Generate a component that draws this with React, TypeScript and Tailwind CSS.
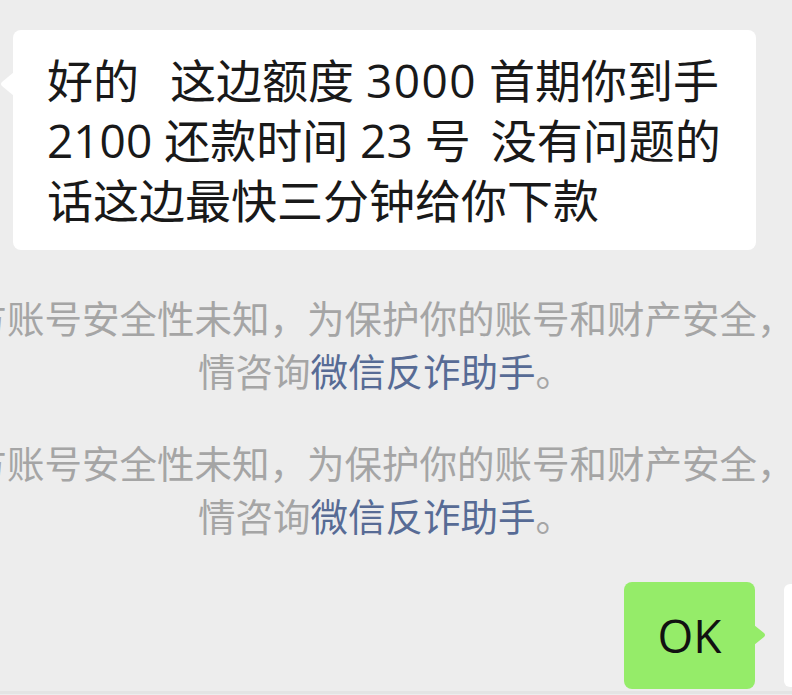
export default function App() {
  return (
    <div className="w-[792px] h-[695px] overflow-hidden bg-[#ededed] flex flex-col pt-[30px] font-['Noto_Sans_CJK_SC',sans-serif]">
      {/* incoming message */}
      <div className="relative ml-[13px] w-[743px] h-[220px] shrink-0 rounded-[8px] bg-white pl-[34px] pt-[20px] text-[46px] leading-[60px] text-[#191919] font-['Open_Sans','Noto_Sans_CJK_SC',sans-serif]">
        <svg className="absolute left-[-13px] top-[42px]" width="14" height="24" viewBox="0 0 14 24">
          <path d="M14 0 L2 10 Q0 12 2 14 L14 24 Z" fill="#ffffff" />
        </svg>
        <div className="whitespace-pre">
          好的<span className="inline-block w-[31px]"> </span>这边额度 <span className="tracking-[1.5px]">3000</span> 首期你到手
        </div>
        <div className="whitespace-pre">
          2100 还款时间 23 号<span className="inline-block w-[20px]"> </span>没有问题的
        </div>
        <div className="whitespace-pre">话这边最快三分钟给你下款</div>
      </div>

      {/* system notices */}
      {[0, 1].map((i) => (
        <div
          key={i}
          className={`${i === 0 ? "mt-[40px]" : "mt-[39px]"} text-[37.5px] leading-[53px] text-[#a5a5a5] shrink-0`}
        >
          <div className="whitespace-nowrap ml-[-68px]">对方账号安全性未知，为保护你的账号和财产安全，</div>
          <div className="whitespace-nowrap pl-[198px]">
            情咨询<span className="text-[#576b95]">微信反诈助手</span>。
          </div>
        </div>
      ))}

      {/* outgoing message */}
      <div className="mt-[41px] flex items-start ml-[624px] shrink-0">
        <div className="relative w-[131px] h-[107px] shrink-0 rounded-[8px] bg-[#95ec69] flex items-center justify-center text-[46px] text-[#111111] font-['Open_Sans',sans-serif]">
          OK
          <svg className="absolute right-[-12px] top-[43px]" width="13" height="20" viewBox="0 0 13 20">
            <path d="M0 0 L10 8 Q12 10 10 12 L0 20 Z" fill="#95ec69" />
          </svg>
        </div>
        <div className="ml-[29px] mt-[2px] w-[100px] h-[103px] shrink-0 rounded-[6px] bg-white" />
      </div>
      <div className="mt-[2px] h-[3px] bg-[#e4e4e4] shrink-0" />
    </div>
  );
}
